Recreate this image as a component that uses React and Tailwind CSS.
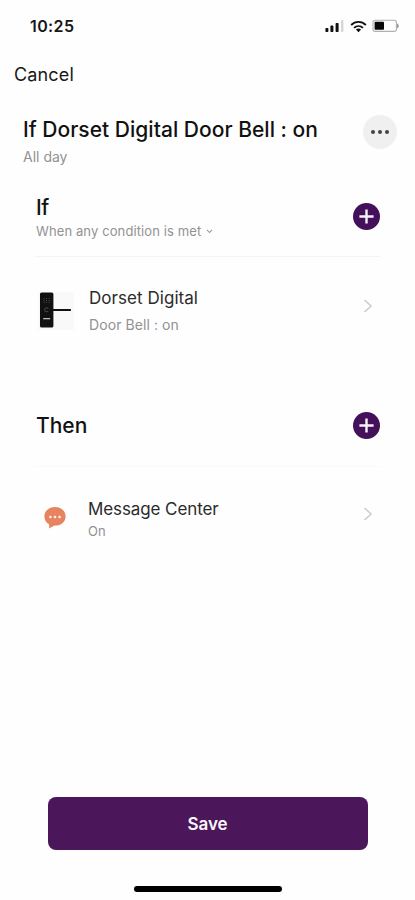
import React from 'react';

function StatusBar() {
  return (
    <div className="flex h-[52px] items-center justify-between pl-[30px] pr-[15px]">
      <span className="text-[16px] font-semibold leading-5 tracking-[0.4px]">10:25</span>
      <div className="flex items-center">
        <svg width="19" height="12" viewBox="0 0 19 12">
          <rect x="0.4" y="8" width="3" height="4" rx="0.8" fill="#111" />
          <rect x="5.4" y="5.6" width="3" height="6.4" rx="0.8" fill="#111" />
          <rect x="10.6" y="3" width="3" height="9" rx="0.8" fill="#111" />
          <rect x="16" y="0" width="2.4" height="12" rx="0.8" fill="#d6d6d6" />
        </svg>
        <svg className="ml-[6px]" width="17" height="13" viewBox="0 0 18 13" fill="none" stroke="#111" strokeWidth="2">
          <path d="M1.2 4.9C5.5 0.5 12.5 0.5 16.8 4.9" />
          <path d="M4.3 8C7 5.4 11 5.4 13.7 8" />
          <path d="M6.3 9.7C7.8 8.4 10.2 8.4 11.7 9.7L9 12.6Z" fill="#111" stroke="none" />
        </svg>
        <svg className="ml-[5px]" width="28" height="14" viewBox="0 0 28 14">
          <rect x="1" y="1.2" width="23.4" height="11.2" rx="2.2" fill="none" stroke="#b0b0b0" strokeWidth="1.1" />
          <rect x="2.6" y="2.8" width="9.4" height="8" rx="0.8" fill="#080808" />
          <path d="M25 4.4C27.4 5.2 27.4 8.4 25 9.2Z" fill="#9a9a9a" />
        </svg>
      </div>
    </div>
  );
}

function AddButton() {
  return (
    <button className="flex size-[27px] items-center justify-center rounded-full bg-[#44105a]">
      <svg width="15" height="15" viewBox="0 0 15 15" stroke="#f7f2f9" strokeWidth="2.4">
        <path d="M7.5 0.4V14.6M0.4 7.5H14.6" />
      </svg>
    </button>
  );
}

function Chevron() {
  return (
    <svg width="10" height="14" viewBox="0 0 10 14" fill="none" stroke="#c8c8c8" strokeWidth="1.3">
      <path d="M1.4 1L8.2 7L1.4 13" />
    </svg>
  );
}

function DoorLock() {
  return (
    <svg width="38" height="40" viewBox="0 0 38 40">
      <rect x="1" y="1" width="36" height="38" rx="2" fill="#f9f9f9" />
      <rect x="3" y="1.5" width="13.4" height="35" rx="1.6" fill="#111" />
      <g fill="none" stroke="#555" strokeWidth="0.8">
        <path d="M7 7V12M9.6 7V12M12.2 7V12" strokeDasharray="1.2 0.8" />
        <circle cx="9.6" cy="18.8" r="2" />
      </g>
      <rect x="6.2" y="27" width="7" height="1.3" fill="#bbb" />
      <rect x="9.6" y="17.9" width="24.4" height="2" rx="0.6" fill="#111" />
    </svg>
  );
}

function MessageBubble() {
  return (
    <svg width="22" height="22" viewBox="0 0 22 22">
      <path d="M11 0C17 0 21.6 4 21.6 9.4C21.6 14.8 17 18.6 11.4 18.6C9.2 18.6 7.6 20.6 5 21.6C5.4 20.2 5.4 18.4 4.8 17C2 15.4 0.4 12.6 0.4 9.4C0.4 4 5 0 11 0Z" fill="#e8835f" />
      <g fill="#fff3ed">
        <circle cx="6.4" cy="10" r="1.3" />
        <circle cx="11" cy="10" r="1.3" />
        <circle cx="15.6" cy="10" r="1.3" />
      </g>
    </svg>
  );
}

export default function App() {
  return (
    <div className="flex h-[900px] w-[415px] flex-col bg-[#fefefe] font-['Inter',sans-serif] text-[#171717]">
      <StatusBar />

      <div className="flex h-[46px] items-center pl-[14px]">
        <button className="text-[18px] leading-6 tracking-[0.15px]">Cancel</button>
      </div>

      <div className="flex h-[70px] items-start justify-between pl-[23px] pr-[18px] pt-[17px]">
        <div>
          <h1 className="whitespace-nowrap pt-px text-[21px] font-medium leading-7 tracking-[0.02px] text-[#111]">
            If Dorset Digital Door Bell : on
          </h1>
          <p className="mt-[3px] text-[14px] leading-5 text-[#929292]">All day</p>
        </div>
        <button className="flex size-[34px] items-center justify-center gap-[3px] rounded-full bg-[#f0f0f0]">
          <span className="size-1 rounded-full bg-[#444]" />
          <span className="size-1 rounded-full bg-[#444]" />
          <span className="size-1 rounded-full bg-[#444]" />
        </button>
      </div>

      {/* If */}
      <section className="mx-[35px] h-[236px]">
        <div className="flex h-[89px] items-start justify-between border-b border-[#f3f3f3] pt-[25px]">
          <div className="pl-[1px]">
            <h2 className="pt-px text-[21px] font-medium leading-7 tracking-[-0.5px] text-[#111]">If</h2>
            <div className="-mt-px flex items-center gap-[5px]">
              <p className="text-[13px] leading-5 tracking-[0.11px] text-[#929292]">When any condition is met</p>
              <svg width="7" height="5" viewBox="0 0 8 6" fill="none" stroke="#999" strokeWidth="1.3">
                <path d="M1 1L4 4.2L7 1" />
              </svg>
            </div>
          </div>
          <div className="pt-[10px]">
            <AddButton />
          </div>
        </div>
        <div className="flex items-start pl-[2px] pt-[28px]">
          <div className="pt-[6px]">
            <DoorLock />
          </div>
          <div className="ml-[14px] flex-1">
            <p className="pt-px text-[17px] leading-6 tracking-[0.05px] text-[#2b2b2b]">Dorset Digital</p>
            <p className="mt-[5px] text-[14px] leading-5 tracking-[0.08px] text-[#929292]">Door Bell : on</p>
          </div>
          <div className="pr-[7px] pt-[14px]">
            <Chevron />
          </div>
        </div>
      </section>

      {/* Then */}
      <section className="mx-[35px]">
        <div className="flex h-[63px] items-start justify-between border-b border-[#f9f9f9] pt-[8px]">
          <h2 className="pl-[1px] text-[21px] font-medium leading-7 text-[#111]">Then</h2>
          <AddButton />
        </div>
        <div className="flex items-start pl-[9px] pt-[30px]">
          <div className="pt-[10px]">
            <MessageBubble />
          </div>
          <div className="ml-[22px] flex-1">
            <p className="text-[17px] leading-6 tracking-[-0.1px] text-[#2b2b2b]">Message Center</p>
            <p className="text-[13px] leading-5 text-[#929292]">On</p>
          </div>
          <div className="pr-[7px] pt-[10px]">
            <Chevron />
          </div>
        </div>
      </section>

      <div className="mt-auto flex flex-col items-center pb-[8px]">
        <button className="h-[53px] w-[320px] rounded-lg bg-[#4b175a] pt-[2px] text-[17px] font-semibold tracking-[-0.1px] text-[#faf5fc]">
          Save
        </button>
        <div className="mt-[36px] h-[6px] w-[148px] rounded-full bg-black" />
      </div>
    </div>
  );
}
